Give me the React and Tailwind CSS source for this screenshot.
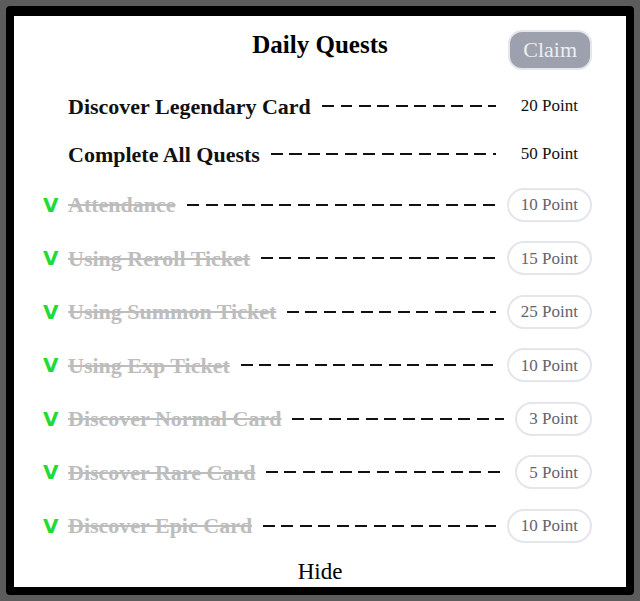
import { useState } from "react";

const quests = [
  { id: 1, title: "Discover Legendary Card", points: 20, done: false },
  { id: 2, title: "Complete All Quests", points: 50, done: false },
  { id: 3, title: "Attendance", points: 10, done: true },
  { id: 4, title: "Using Reroll Ticket", points: 15, done: true },
  { id: 5, title: "Using Summon Ticket", points: 25, done: true },
  { id: 6, title: "Using Exp Ticket", points: 10, done: true },
  { id: 7, title: "Discover Normal Card", points: 3, done: true },
  { id: 8, title: "Discover Rare Card", points: 5, done: true },
  { id: 9, title: "Discover Epic Card", points: 10, done: true },
];

const DailyQuests = () => {
  const [open, setOpen] = useState(true);

  return (
    <div className="w-[640px] h-[601px] bg-[#5c5c5c] p-[6px] font-['Liberation_Serif',serif]">
      <div className="h-full bg-black rounded-[4px] px-[8px] pt-[10px] pb-[8px]">
        <div className="h-full bg-white flex flex-col pl-[29px] pr-[34px]">
          {/* Header */}
          <div className="grid grid-cols-[1fr_auto_1fr] items-start pt-[14px] mb-[12px]">
            <div></div>
            <h1 className="text-[25px] leading-[28px] font-bold text-black mt-[1px] ml-[5px]">
              Daily Quests
            </h1>
            <div className="flex justify-end">
              <button className="h-[40px] px-[13px] rounded-[14px] bg-[#9ca1ad] border-2 border-[#e4e6ec] text-[#eceef2] text-[22px] leading-none">
                Claim
              </button>
            </div>
          </div>

          {/* Quest list */}
          {open && (
            <div className="flex flex-col">
              {quests.map((q) => (
                <div
                  key={q.id}
                  className={`flex items-center ${q.done ? "h-[53.5px]" : "h-[48px]"}`}
                >
                  <div className="w-[25px] shrink-0 text-[#1fdc35] text-[20px] font-bold font-['DejaVu_Sans',sans-serif] leading-none">
                    {q.done ? "V" : ""}
                  </div>
                  <span
                    className={`text-[22px] font-bold whitespace-nowrap ${
                      q.done ? "text-[#bdbdbd] line-through" : "text-[#111]"
                    }`}
                  >
                    {q.title}
                  </span>
                  <div className="flex-1 mx-[11px] h-[2px] bg-[repeating-linear-gradient(to_right,#111_0,#111_12px,transparent_12px,transparent_18.5px)]"></div>
                  <div
                    className={`h-[34px] px-[12px] flex items-center rounded-full border-2 text-[17px] whitespace-nowrap ${
                      q.done
                        ? "border-[#e4e6ec] text-[#5f6470]"
                        : "border-transparent text-[#111]"
                    }`}
                  >
                    {q.points} Point
                  </div>
                </div>
              ))}
            </div>
          )}

          <button
            onClick={() => setOpen(!open)}
            className="mt-[4px] self-center ml-[5px] text-[23px] text-black leading-[30px]"
          >
            Hide
          </button>
        </div>
      </div>
    </div>
  );
};

export default DailyQuests;
